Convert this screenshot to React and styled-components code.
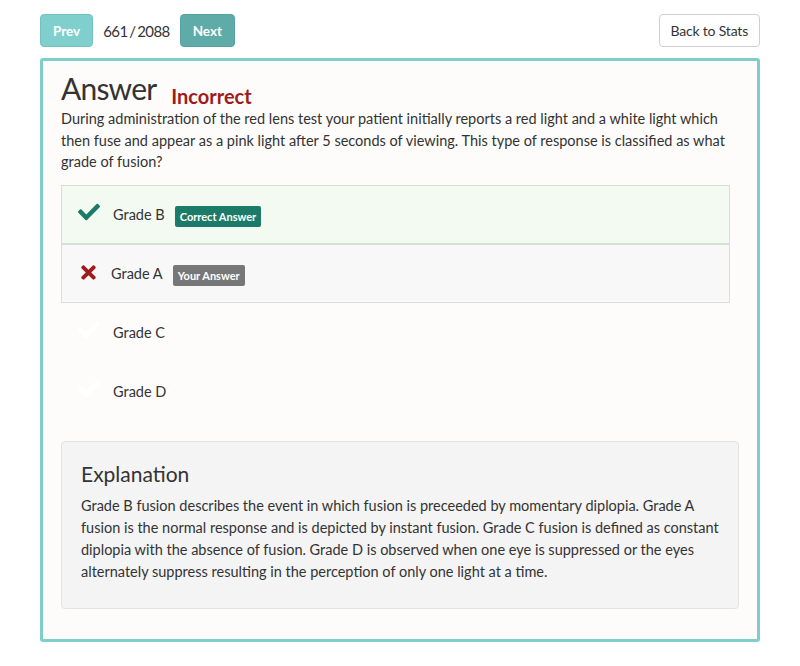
import React from "react";
import styled, { createGlobalStyle } from "styled-components";
import { FaCheck, FaTimes } from "react-icons/fa";

const Global = createGlobalStyle`
  html, body { margin: 0; padding: 0; background: #ffffff; }
  body { font-family: Lato, "Noto Sans", sans-serif; color: #333; }
`;

const Page = styled.div`
  width: 800px;
  padding: 14px 40px 20px 40px;
  box-sizing: border-box;
`;

const Toolbar = styled.div`
  display: flex;
  align-items: center;
  height: 33px;
  margin-bottom: 11px;
`;

const NavButton = styled.button`
  height: 33px;
  padding: 0 12px;
  border-radius: 4px;
  border: 1px solid ${(p) => (p.$faded ? "#74c1be" : "#56a29f")};
  background: ${(p) => (p.$faded ? "#7fcfcc" : "#5eaba8")};
  color: #fff;
  font-family: Lato, sans-serif;
  font-weight: 700;
  font-size: 13.5px;
  cursor: pointer;
`;

const Counter = styled.span`
  font-size: 15px;
  color: #333;
  margin: 0 10px;
  letter-spacing: -0.6px;
  word-spacing: -1.5px;
`;

const Spacer = styled.div`
  flex: 1;
`;

const BackButton = styled.button`
  height: 33px;
  padding: 0 11px;
  border-radius: 4px;
  border: 1px solid #cfcfcf;
  background: #fff;
  color: #333;
  font-family: Lato, sans-serif;
  font-size: 14px;
  letter-spacing: -0.2px;
`;

const Card = styled.div`
  border: 3px solid #7ecfcc;
  border-radius: 3px;
  background: #fdfcfa;
  padding: 7px 18px 30px 18px;
`;

const TitleRow = styled.div`
  display: flex;
  align-items: baseline;
  gap: 15px;
`;

const Title = styled.h1`
  margin: 0;
  font-size: 30px;
  font-weight: 400;
  letter-spacing: -0.8px;
  color: #333;
  line-height: 40px;
`;

const Verdict = styled.span`
  font-size: 20px;
  font-weight: 700;
  color: #a01c1c;
  position: relative;
  top: 4px;
`;

const Question = styled.p`
  margin: 0 0 12px 0;
  font-size: 14.5px;
  line-height: 21.5px;
  color: #333;
`;

const Options = styled.div`
  width: 669px;
  display: flex;
  flex-direction: column;
`;

const Option = styled.div`
  height: 59px;
  box-sizing: border-box;
  display: flex;
  align-items: center;
  padding-left: 16px;
  background: ${(p) => (p.$kind === "correct" ? "#f3faf2" : p.$kind === "wrong" ? "#f8f8f8" : "transparent")};
  border: 1px solid ${(p) => (p.$kind === "correct" ? "#cfe5c9" : p.$kind === "wrong" ? "#dddddd" : "transparent")};
`;

const IconBox = styled.span`
  width: ${(p) => p.$w || 35}px;
  display: flex;
  align-items: center;
  color: ${(p) => p.$color};
  font-size: ${(p) => p.$size}px;
  margin-top: ${(p) => p.$dy || 0}px;
`;

const Label = styled.span`
  font-size: 14.5px;
  color: #333;
`;

const Badge = styled.span`
  margin-left: 10px;
  margin-top: 4px;
  background: ${(p) => p.$bg};
  color: #fff;
  font-size: 11px;
  font-weight: 700;
  padding: 3px 5px;
  border-radius: 2px;
  line-height: 15px;
`;

const Explanation = styled.div`
  margin-top: 20px;
  background: #f4f4f4;
  border: 1px solid #e3e3e3;
  border-radius: 4px;
  padding: 16px 19px 25px 19px;
`;

const ExplTitle = styled.h2`
  margin: 0 0 5px 0;
  font-size: 21px;
  font-weight: 400;
  color: #333;
  line-height: 32px;
`;

const ExplText = styled.p`
  margin: 0;
  font-size: 14.5px;
  line-height: 22px;
  color: #333;
`;

export default function App() {
  return (
    <>
      <Global />
      <Page>
        <Toolbar>
          <NavButton $faded>Prev</NavButton>
          <Counter>661 / 2088</Counter>
          <NavButton>Next</NavButton>
          <Spacer />
          <BackButton>Back to Stats</BackButton>
        </Toolbar>
        <Card>
          <TitleRow>
            <Title>Answer</Title>
            <Verdict>Incorrect</Verdict>
          </TitleRow>
          <Question>
            During administration of the red lens test your patient initially reports a red light and a white light which
            then fuse and appear as a pink light after 5 seconds of viewing. This type of response is classified as what
            grade of fusion?
          </Question>
          <Options>
            <Option $kind="correct">
              <IconBox $color="#1b7a68" $size={22} $dy={-4}>
                <FaCheck />
              </IconBox>
              <Label>Grade B</Label>
              <Badge $bg="#1b7a68">Correct Answer</Badge>
            </Option>
            <Option $kind="wrong">
              <IconBox $color="#a01c1c" $size={21} $dy={-2} $w={33}>
                <FaTimes />
              </IconBox>
              <Label>Grade A</Label>
              <Badge $bg="#777777">Your Answer</Badge>
            </Option>
            <Option>
              <IconBox $color="#ffffff" $size={22} $dy={-4}>
                <FaCheck />
              </IconBox>
              <Label>Grade C</Label>
            </Option>
            <Option>
              <IconBox $color="#ffffff" $size={22} $dy={-4}>
                <FaCheck />
              </IconBox>
              <Label>Grade D</Label>
            </Option>
          </Options>
          <Explanation>
            <ExplTitle>Explanation</ExplTitle>
            <ExplText>
              Grade B fusion describes the event in which fusion is preceeded by momentary diplopia. Grade A fusion is
              the normal response and is depicted by instant fusion. Grade C fusion is defined as constant diplopia
              with the absence of fusion. Grade D is observed when one eye is suppressed or the eyes alternately
              suppress resulting in the perception of only one light at a time.
            </ExplText>
          </Explanation>
        </Card>
      </Page>
    </>
  );
}
